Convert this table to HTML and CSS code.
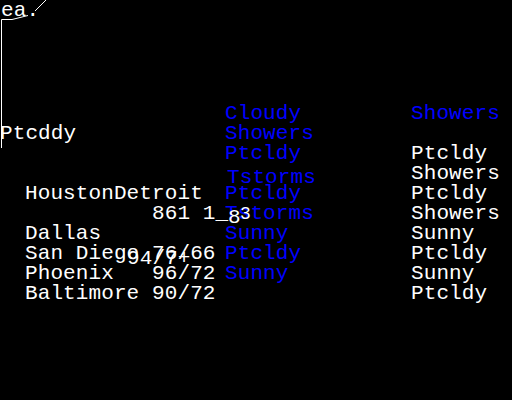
FILE: index.html
```html
<!DOCTYPE html>
<html>
<head>
<meta charset="utf-8">
<link rel="stylesheet" href="styles.css">
</head>
<body>
<div class="screen">
  <svg class="trace" width="512" height="400" viewBox="0 0 512 400">
    <polyline points="1.5,148 1.5,19.5 12,19.5 28,15.5" fill="none" stroke="#fff" stroke-width="1"/>
    <line x1="35" y1="11" x2="46" y2="0" stroke="#fff" stroke-width="1"/>
  </svg>
  <div class="stray ea">ea.</div>

  <div class="table">
    <div class="c l"></div><div class="c b">Cloudy</div><div class="c b">Showers</div>
    <div class="c l"></div><div class="c b">Showers</div><div class="c w"></div>
    <div class="c l"></div><div class="c b">Ptcldy</div><div class="c w">Ptcldy</div>
    <div class="c l"></div><div class="c b shift">Tstorms</div><div class="c w">Showers</div>
    <div class="c l">HoustonDetroit</div><div class="c b">Ptcldy</div><div class="c w">Ptcldy</div>
    <div class="c l">          861 1_</div><div class="c b">Tstorms</div><div class="c w">Showers</div>
    <div class="c l">Dallas</div><div class="c b">Sunny</div><div class="c w">Sunny</div>
    <div class="c l">San Diego 76/66</div><div class="c b">Ptcldy</div><div class="c w">Ptcldy</div>
    <div class="c l">Phoenix   96/72</div><div class="c b">Sunny</div><div class="c w">Sunny</div>
    <div class="c l">Baltimore 90/72</div><div class="c b"></div><div class="c w">Ptcldy</div>
  </div>

  <div class="stray ptcddy">Ptcddy</div>
  <div class="stray s94">94/7+</div>
  <div class="stray s8">8</div>
  <div class="stray s3">3</div>
</div>
</body>
</html>
```
FILE: styles.css
```css
html, body {
  margin: 0;
  padding: 0;
  background: #000;
}
.screen {
  position: relative;
  width: 512px;
  height: 400px;
  background: #000;
  overflow: hidden;
  font-family: "Liberation Mono", "DejaVu Sans Mono", monospace;
  font-size: 21px;
  letter-spacing: 0.1px;
  line-height: 20px;
  color: #fff;
}
.trace {
  position: absolute;
  left: 0;
  top: 0;
}
.table {
  display: grid;
  grid-template-columns: 200px 186px 101px;
  grid-auto-rows: 20px;
  padding-top: 104px;
  padding-left: 25px;
}
.c {
  white-space: pre;
  overflow: visible;
}
.b {
  color: #0000ff;
}
.w {
  color: #fff;
}
.shift {
  padding-top: 4px;
  padding-left: 2px;
}
.stray {
  position: absolute;
  white-space: pre;
  color: #fff;
}
.ea {
  left: 1px;
  top: 1px;
}
.ptcddy {
  left: 0;
  top: 124px;
}
.s94 {
  left: 127px;
  top: 249px;
}
.s8 {
  left: 228px;
  top: 208px;
}
.s3 {
  left: 240px;
  top: 204px;
  font-size: 18px;
}
```
